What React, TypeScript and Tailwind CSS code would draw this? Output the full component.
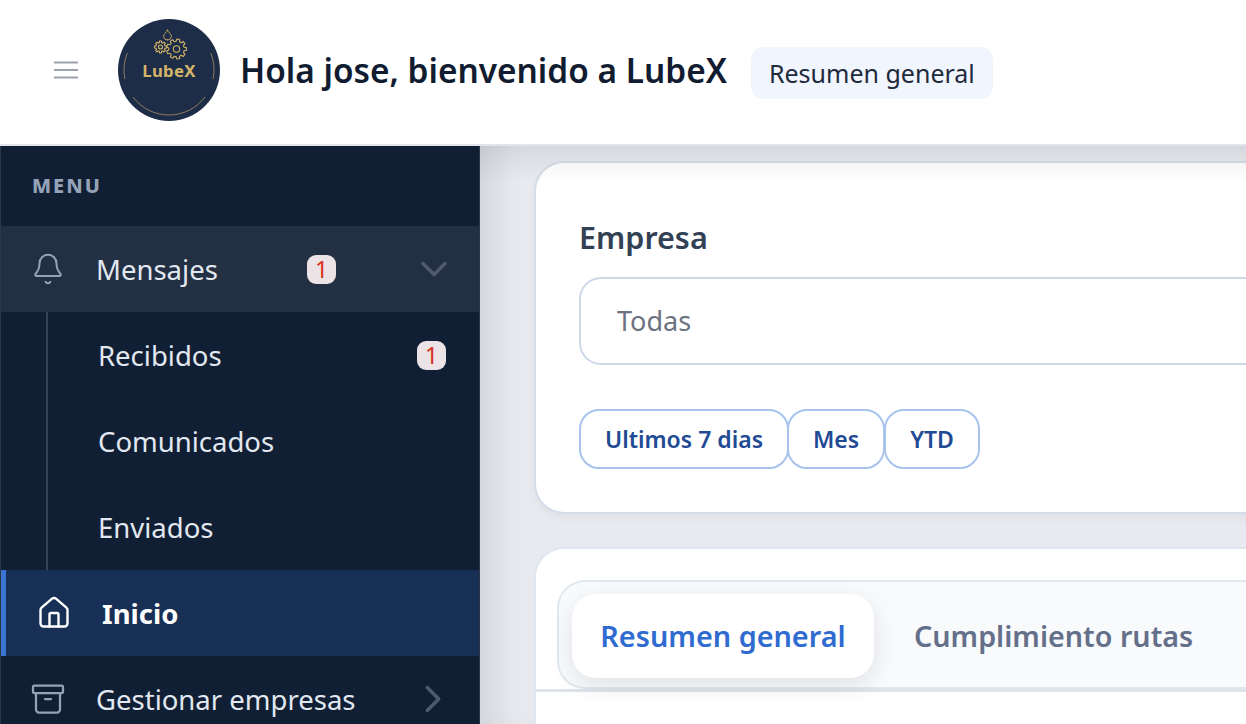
import { Archive, Bell, ChevronDown, ChevronRight, Droplet, House } from "lucide-react";

// outline of a toothed gear, centred on cx/cy
function gearPath(cx: number, cy: number, teeth: number, outer: number, inner: number) {
  const step = (Math.PI * 2) / teeth;
  const pts: string[] = [];
  for (let i = 0; i < teeth; i++) {
    const a = i * step;
    const at = (r: number, t: number) => `${(cx + r * Math.cos(a + t * step)).toFixed(2)} ${(cy + r * Math.sin(a + t * step)).toFixed(2)}`;
    pts.push(at(inner, -0.32), at(outer, -0.2), at(outer, 0.2), at(inner, 0.32));
  }
  return `M${pts.join("L")}Z`;
}

function Badge() {
  return (
    <span className="flex h-[29px] w-[29px] shrink-0 items-center justify-center rounded-[9px] bg-[#ebe3e6] text-[23px] leading-none text-[#d9301f]">
      1
    </span>
  );
}

function Logo() {
  return (
    <div className="relative flex h-[102px] w-[102px] shrink-0 flex-col items-center rounded-full bg-[#1e2d47] pt-[9px]">
      <svg className="absolute inset-0 h-full w-full" viewBox="0 0 102 102" fill="none" stroke="#a8925f" strokeWidth="0.8">
        <path d="M9.3 34 A45 45 0 0 0 6.9 60" />
        <path d="M92.7 34 A45 45 0 0 1 95.1 60" />
        <path d="M15 78 A45 45 0 0 0 87 78" />
      </svg>
      <Droplet className="-ml-[3px] h-[13px] w-[13px] text-[#d4b468]" strokeWidth={1.6} />
      <svg className="-mt-[3px] ml-[4px] h-[22px] w-[34px]" viewBox="0 0 34 22" fill="none" stroke="#d4b468" strokeWidth="1.1">
        <path d={gearPath(6.5, 9, 8, 6, 4.6)} />
        <circle cx="6.5" cy="9" r="2" />
        <path d={gearPath(22.5, 11, 9, 10, 7.8)} />
        <circle cx="22.5" cy="11" r="3.2" />
      </svg>
      <span className="mt-[1px] text-[16.7px] font-bold leading-[20px] tracking-[0.3px] text-[#d4b468]">LubeX</span>
    </div>
  );
}

function Header() {
  return (
    <header className="flex h-[146px] shrink-0 items-center border-b-2 border-[#e2e6ec] bg-white pb-[4px] pl-[54px]">
      <svg className="h-[18px] w-[24px]" viewBox="0 0 24 18" fill="none" stroke="#9ca3af" strokeWidth="2">
        <path d="M0 1.5H24M0 9H24M0 16.5H24" />
      </svg>
      <div className="ml-[40px]">
        <Logo />
      </div>
      <h1 className="ml-[20px] mt-[1px] text-[33.4px] font-semibold leading-none text-[#111c30]">Hola jose, bienvenido a LubeX</h1>
      <span className="ml-[24px] mt-[6px] flex h-[52px] items-center rounded-[12px] bg-[#f1f5fd] px-[18px] pt-[2px] text-[25px] text-[#1f2a3c]">
        Resumen general
      </span>
    </header>
  );
}

function SubItem({ label, badge }: { label: string; badge?: boolean }) {
  return (
    <div className="flex h-[86px] items-center justify-between pl-[50px] pr-[33px] text-[27.5px] text-[#e2e8f0]">
      <span className="pt-[2px]">{label}</span>
      {badge && <Badge />}
    </div>
  );
}

function Sidebar() {
  return (
    <aside className="flex w-[480px] shrink-0 flex-col overflow-hidden border-x border-[#2a3648] bg-[#111f35]">
      <div className="flex h-[80px] shrink-0 items-center pl-[31px] text-[20px] font-extrabold tracking-[2px] text-[#94a3b8]">MENU</div>
      <div className="flex h-[86px] shrink-0 items-center bg-[#233044] pl-[30px] text-[27.5px] text-[#e2e8f0]">
        <Bell className="h-[34px] w-[34px] shrink-0 text-[#94a3b8]" strokeWidth={1.4} />
        <span className="ml-[31px] w-[211px] pt-[2px]">Mensajes</span>
        <Badge />
        <ChevronDown className="ml-[76px] h-[44px] w-[44px] shrink-0 text-[#4f5b6d]" strokeWidth={1.9} />
      </div>
      <div className="ml-[45px] shrink-0 border-l-2 border-[#374354]">
        <SubItem label="Recibidos" badge />
        <SubItem label="Comunicados" />
        <SubItem label="Enviados" />
      </div>
      <div className="-ml-[1px] flex h-[86px] shrink-0 items-center border-l-[6px] border-[#3b74d1] bg-[#183055] pl-[30px] text-[27.5px] font-bold text-white">
        <House className="h-[36px] w-[36px] shrink-0" strokeWidth={1.6} />
        <span className="ml-[30px] pt-[2px]">Inicio</span>
      </div>
      <div className="flex h-[86px] shrink-0 items-center pl-[29px] text-[27.5px] text-[#e2e8f0]">
        <Archive className="h-[36px] w-[36px] shrink-0 text-[#94a3b8]" strokeWidth={1.5} />
        <span className="ml-[30px] w-[314px] pt-[2px]">Gestionar empresas</span>
        <ChevronRight className="h-[46px] w-[46px] shrink-0 text-[#4f5b6d]" strokeWidth={1.8} />
      </div>
    </aside>
  );
}

function Pill({ label }: { label: string }) {
  return (
    <button className="flex h-[60px] items-center rounded-[20px] border-2 border-[#a8c4ec] bg-white px-[24px] text-[23px] font-semibold text-[#1f4a94]">
      {label}
    </button>
  );
}

function Filters() {
  return (
    <section className="h-[353px] w-[900px] shrink-0 rounded-l-[30px] border-2 border-r-0 border-[#d5dde9] bg-white pl-[43px] pt-[54px] shadow-[0_4px_10px_rgba(15,23,42,0.04)]">
      <h2 className="text-[30.5px] font-semibold leading-[40px] text-[#334155]">Empresa</h2>
      <div className="mt-[20px] flex h-[88px] items-center rounded-l-[22px] border-2 border-r-0 border-[#cdd8e8] pl-[36px] text-[27px] text-[#6b7280]">
        Todas
      </div>
      <div className="mt-[44px] flex">
        <Pill label="Ultimos 7 dias" />
        <div className="-ml-[2px]">
          <Pill label="Mes" />
        </div>
        <div className="-ml-[1px]">
          <Pill label="YTD" />
        </div>
      </div>
    </section>
  );
}

function Tabs() {
  return (
    <section className="mt-[33px] h-[300px] w-[900px] shrink-0 rounded-tl-[30px] border-2 border-r-0 border-[#dfe6f0] bg-white pt-[31px]">
      <div className="border-b-[3px] border-[#dfe4ec]">
        <div className="ml-[21px] flex h-[109px] items-start rounded-l-[28px] border-2 border-r-0 border-[#e2e8f0] bg-[#f8fafc] pl-[13px] pt-[12px]">
          <div className="flex h-[84px] w-[302px] items-center justify-center rounded-[24px] bg-white text-[28.8px] font-semibold text-[#2f6bd0] shadow-[0_8px_24px_rgba(15,23,42,0.10)]">
            Resumen general
          </div>
          <div className="ml-[40px] flex h-[84px] items-center text-[28.7px] font-semibold text-[#64708a]">Cumplimiento rutas</div>
        </div>
      </div>
    </section>
  );
}

export default function App() {
  return (
    <div className="flex h-[724px] w-[1246px] flex-col overflow-hidden bg-white font-['Noto_Sans',sans-serif]">
      <Header />
      <div className="flex min-h-0 flex-1">
        <Sidebar />
        <main className="relative min-w-0 flex-1 overflow-hidden bg-[#e8eaef] pl-[54px] pt-[15px] shadow-[inset_30px_0_30px_-16px_rgba(15,23,42,0.10)]">
          <Filters />
          <Tabs />
          {/* shadow the header casts over the content */}
          <div className="pointer-events-none absolute inset-x-0 top-0 h-[36px] bg-gradient-to-b from-black/7 to-transparent" />
        </main>
      </div>
    </div>
  );
}
